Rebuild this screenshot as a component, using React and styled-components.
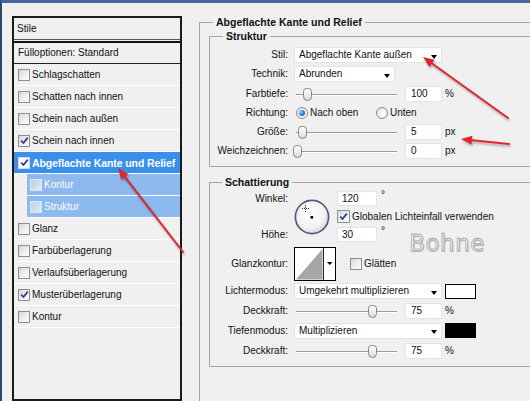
import React from "react";
import styled, { createGlobalStyle } from "styled-components";

const GlobalStyle = createGlobalStyle`
  html, body { margin: 0; padding: 0; background: #f0f0f0; }
  body { font-family: "Liberation Sans", Arial, sans-serif; }
  *, *::before, *::after { box-sizing: border-box; }
`;

const Page = styled.div`
  position: relative;
  width: 530px;
  height: 401px;
  overflow: hidden;
`;

const Frame = styled.div`
  width: 530px;
  height: 401px;
  background: #f0f0f0;
  border-top: 3px solid #47679c;
  border-left: 2px solid #2a4778;
  display: flex;
  align-items: flex-start;
  font-family: "Liberation Sans", Arial, sans-serif;
  font-size: 10px;
  line-height: 12px;
  color: #111;
`;

/* ---------- left: layer style list ---------- */

const StylesPane = styled.div`
  flex: none;
  margin: 13px 0 0 10px;
  width: 170px;
  height: 385px;
  border: 2px solid #1b1b1b;
`;

const PaneHeader = styled.div`
  height: 22px;
  padding-left: 3px;
  display: flex;
  align-items: center;
  border-bottom: 1px solid #5a5a5a;
  margin-bottom: 1px;
`;

const BlendRow = styled.div`
  height: 23px;
  padding-left: 4px;
  display: flex;
  align-items: center;
  border-top: 2px solid #111;
  border-bottom: 1px solid #222;
`;

const LayerRow = styled.div`
  height: 22px;
  display: flex;
  align-items: center;
  gap: 2px;
  white-space: nowrap;
  border-bottom: 1px solid #fff;
  margin-left: ${(p) => (p.$sub ? 13 : 0)}px;
  padding-left: ${(p) => (p.$sub ? 3 : 4)}px;
  background: ${(p) => (p.$selected ? "#3a8fea" : p.$sub ? "#8cb9ee" : "transparent")};
  color: ${(p) => (p.$selected || p.$sub ? "#fff" : "#111")};
  font-weight: ${(p) => (p.$selected ? 700 : 400)};
  font-size: ${(p) => (p.$selected ? "10.5px" : "10px")};
  letter-spacing: ${(p) => (p.$selected ? "-0.1px" : "0")};
`;

const CheckBox = styled.span`
  flex: none;
  width: ${(p) => p.$size || 12}px;
  height: ${(p) => p.$size || 12}px;
  display: inline-flex;
  align-items: center;
  justify-content: center;
  border: 1px solid ${(p) => (p.$tone === "sub" ? "#dfe8f5" : p.$tone === "sel" ? "#d0dcec" : "#8e8f8f")};
  background: ${(p) =>
    p.$tone === "sub"
      ? "linear-gradient(135deg, #b9cfeb, #dfe9f7)"
      : p.$tone === "sel"
      ? "#fbfbfb"
      : "linear-gradient(135deg, #d6d6d6 0%, #f1f1f1 60%, #fbfbfb 100%)"};
`;

const Check = () => (
  <svg width="9" height="9" viewBox="0 0 9 9">
    <polyline points="1.2,4.6 3.5,7 7.8,1.6" fill="none" stroke="#2b3d92" strokeWidth="1.7" />
  </svg>
);

const Tick = ({ checked, tone, size }) => (
  <CheckBox $tone={tone} $size={size}>{checked ? <Check /> : null}</CheckBox>
);

/* ---------- right: bevel & emboss settings ---------- */

const Group = styled.fieldset`
  margin: ${(p) => p.$top || 0}px 0 0 ${(p) => p.$left || 0}px;
  padding: ${(p) => p.$pad || "0"};
  border: 1px solid #a4a4a4;
  width: ${(p) => p.$width}px;
  min-width: 0;
  min-height: ${(p) => p.$minh || 0}px;
  flex: none;
`;

const Legend = styled.legend`
  margin-left: ${(p) => p.$indent}px;
  padding: 0 3px;
  font-size: 10.5px;
  line-height: 13px;
  font-weight: 700;
  color: #111;
`;

const FieldRow = styled.div`
  display: flex;
  align-items: center;
  height: ${(p) => p.$h || 16}px;
  margin-top: ${(p) => p.$gap || 0}px;
  white-space: nowrap;
`;

const Label = styled.span`
  flex: none;
  width: 78px;
  margin-right: 6px;
  text-align: right;
  white-space: nowrap;
`;

const Select = styled.div`
  flex: none;
  width: ${(p) => p.$w}px;
  height: 16px;
  padding: 0 4px 0 4px;
  display: flex;
  align-items: center;
  justify-content: space-between;
  background: #fff;
  border: 1px solid #e3e3e3;
`;

const Caret = styled.span`
  width: 0;
  height: 0;
  margin-top: 3px;
  border-left: 3.5px solid transparent;
  border-right: 3.5px solid transparent;
  border-top: 4px solid #000;
`;

const Slider = styled.div`
  position: relative;
  flex: none;
  width: 108px;
  height: 16px;
  &::before {
    content: "";
    position: absolute;
    left: 2px;
    right: 5px;
    top: 8px;
    height: 1px;
    background: #9c9c9c;
    box-shadow: 0 1px 0 #fff;
  }
`;

const Thumb = styled.span`
  position: absolute;
  top: 2px;
  width: 9px;
  height: 13px;
  border: 1px solid #858585;
  border-radius: 4px 4px 5px 5px;
  background: linear-gradient(#ffffff, #dcdcdc);
`;

const NumBox = styled.div`
  flex: none;
  width: ${(p) => p.$w || 37}px;
  height: ${(p) => p.$h || 16}px;
  margin-left: ${(p) => p.$ml || 0}px;
  padding-left: ${(p) => p.$pl || 5}px;
  display: flex;
  align-items: center;
  background: #fff;
  border: 1px solid #e4e4e4;
`;

const Unit = styled.span`
  margin-left: 3px;
`;

const Degree = styled.span`
  align-self: flex-start;
  margin-left: 4px;
  margin-top: -2px;
  font-size: 10px;
`;

const Radio = styled.span`
  flex: none;
  width: 12px;
  height: 12px;
  border-radius: 50%;
  border: 1px solid #8b8b8b;
  background: radial-gradient(circle at 60% 60%, #ffffff 0%, #e6e6e6 70%, #cfcfcf 100%);
  display: inline-flex;
  align-items: center;
  justify-content: center;
  &::after {
    content: "";
    display: ${(p) => (p.$on ? "block" : "none")};
    width: 6px;
    height: 6px;
    border-radius: 50%;
    background: radial-gradient(circle at 35% 35%, #8fd0ff 0%, #1e78d0 55%, #0b4a92 100%);
  }
`;

const Option = styled.span`
  display: inline-flex;
  align-items: center;
  gap: 2px;
  width: ${(p) => (p.$w ? `${p.$w}px` : "auto")};
  margin-left: ${(p) => p.$ml || 0}px;
`;

const Swatch = styled.span`
  flex: none;
  width: 31px;
  height: 15px;
  margin-left: 3px;
  border: 1px solid #000;
  background: ${(p) => p.$color};
`;

const AngleGrid = styled.div`
  display: grid;
  grid-template-columns: 78px 36px auto;
  grid-template-rows: 15px 13px 15px;
  column-gap: 6px;
  row-gap: 4px;
  align-items: center;
`;

const GridLabel = styled.span`
  grid-column: 1;
  grid-row: ${(p) => p.$row};
  text-align: right;
  white-space: nowrap;
`;

const DialCell = styled.div`
  grid-column: 2;
  grid-row: 1 / 4;
  width: 36px;
  height: 36px;
`;

const GridLine = styled.div`
  grid-column: 3;
  grid-row: ${(p) => p.$row};
  margin-left: 1px;
  height: 100%;
  display: flex;
  align-items: center;
  gap: ${(p) => p.$gap || 0}px;
  white-space: nowrap;
`;

const Preview = styled.span`
  align-self: flex-start;
  margin: 9px 0 -9px 24px;
  font-family: "DejaVu Sans", Verdana, sans-serif;
  font-size: 23px;
  line-height: 15px;
  letter-spacing: 0.5px;
  color: #ededed;
  -webkit-text-stroke: 0.8px #a8a8a8;
  text-shadow: 1px 1px 1px rgba(0, 0, 0, 0.22), -1px -1px 0 #fff;
`;

const ContourBox = styled.div`
  flex: none;
  width: 42px;
  height: 34px;
`;

const CheckLabel = styled.span`
  display: inline-flex;
  align-items: center;
  gap: 2px;
  margin-left: ${(p) => p.$ml || 0}px;
`;

/* ---------- drawings ---------- */

const AngleDial = () => (
  <svg width="36" height="36" viewBox="0 0 36 36">
    <defs>
      <radialGradient id="dialFill" cx="45%" cy="40%" r="62%">
        <stop offset="0" stopColor="#ffffff" />
        <stop offset="0.7" stopColor="#f2f2f2" />
        <stop offset="1" stopColor="#d2d2d2" />
      </radialGradient>
    </defs>
    <circle cx="18" cy="18" r="16.6" fill="url(#dialFill)" stroke="#4f5a7c" strokeWidth="1.7" />
    <g stroke="#333" strokeWidth="1" strokeDasharray="1 1">
      <line x1="8" y1="9.5" x2="15" y2="9.5" />
      <line x1="11.5" y1="6" x2="11.5" y2="13" />
    </g>
    <rect x="16.5" y="17" width="2.6" height="2.6" fill="#000" />
  </svg>
);

const ContourPreview = () => (
  <svg width="42" height="34" viewBox="0 0 42 34">
    <rect x="0.5" y="0.5" width="41" height="33" fill="#fff" stroke="#000" />
    <polygon points="2,32.5 28.5,2 28.5,32.5" fill="#a6a6a6" />
    <line x1="29.5" y1="1" x2="29.5" y2="33" stroke="#222" />
    <polygon points="33,15 38.5,15 35.75,18" fill="#000" />
  </svg>
);

const Overlay = styled.svg`
  position: absolute;
  left: 0;
  top: 0;
  pointer-events: none;
  filter: drop-shadow(1px 2px 1px rgba(0, 0, 0, 0.3));
`;

const Arrow = ({ x1, y1, x2, y2 }) => {
  const dx = x2 - x1;
  const dy = y2 - y1;
  const len = Math.hypot(dx, dy);
  const ux = dx / len;
  const uy = dy / len;
  const hl = 11;
  const hw = 4.5;
  const bx = x2 - ux * hl;
  const by = y2 - uy * hl;
  const px = -uy * hw;
  const py = ux * hw;
  return (
    <g>
      <line x1={x1} y1={y1} x2={bx + ux * 2} y2={by + uy * 2} stroke="#e1252b" strokeWidth="2" strokeLinecap="round" />
      <polygon points={`${x2},${y2} ${bx + px},${by + py} ${bx - px},${by - py}`} fill="#e1252b" />
    </g>
  );
};

/* ---------- data ---------- */

const layers = [
  { name: "Schlagschatten" },
  { name: "Schatten nach innen" },
  { name: "Schein nach außen" },
  { name: "Schein nach innen", checked: true },
  { name: "Abgeflachte Kante und Relief", checked: true, selected: true },
  { name: "Kontur", sub: true },
  { name: "Struktur", sub: true },
  { name: "Glanz" },
  { name: "Farbüberlagerung" },
  { name: "Verlaufsüberlagerung" },
  { name: "Musterüberlagerung", checked: true },
  { name: "Kontur" },
];

const SliderField = ({ label, pos, value, unit, gap }) => (
  <FieldRow $gap={gap}>
    <Label>{label}</Label>
    <Slider>
      <Thumb style={{ left: `${pos * 100 - 1}px` }} />
    </Slider>
    <NumBox $ml={3}>{value}</NumBox>
    <Unit>{unit}</Unit>
  </FieldRow>
);

export default function App() {
  return (
    <Page>
      <GlobalStyle />
      <Frame>
        <StylesPane>
          <PaneHeader>Stile</PaneHeader>
          <BlendRow>Fülloptionen: Standard</BlendRow>
          {layers.map((l, i) => (
            <LayerRow key={i} $sub={l.sub} $selected={l.selected}>
              <Tick checked={l.checked} tone={l.selected ? "sel" : l.sub ? "sub" : undefined} />
              <span>{l.name}</span>
            </LayerRow>
          ))}
        </StylesPane>

        <Group $top={12.5} $left={17} $width={360} $minh={420} $pad="0 0 0 9px">
          <Legend $indent={4}>Abgeflachte Kante und Relief</Legend>

          <Group $top={1} $width={340} $pad="4.5px 0 7px 0">
            <Legend $indent={13}>Struktur</Legend>
            <FieldRow>
              <Label>Stil:</Label>
              <Select $w={148}>
                <span>Abgeflachte Kante außen</span>
                <Caret />
              </Select>
            </FieldRow>
            <FieldRow $gap={3.3}>
              <Label>Technik:</Label>
              <Select $w={101}>
                <span>Abrunden</span>
                <Caret />
              </Select>
            </FieldRow>
            <SliderField gap={3.3} label="Farbtiefe:" pos={0.1} value="100" unit="%" />
            <FieldRow $gap={3.3}>
              <Label>Richtung:</Label>
              <Option $w={80} $ml={2}>
                <Radio $on />
                <span>Nach oben</span>
              </Option>
              <Option>
                <Radio />
                <span>Unten</span>
              </Option>
            </FieldRow>
            <SliderField gap={3.3} label="Größe:" pos={0.05} value="5" unit="px" />
            <SliderField gap={3.3} label="Weichzeichnen:" pos={0} value="0" unit="px" />
          </Group>

          <Group $top={8.5} $width={340} $pad="2.5px 0 7px 0">
            <Legend $indent={12}>Schattierung</Legend>
            <AngleGrid>
              <GridLabel $row={1}>Winkel:</GridLabel>
              <DialCell>
                <AngleDial />
              </DialCell>
              <GridLine $row={1}>
                <NumBox $w={40} $h={15} $pl={4}>120</NumBox>
                <Degree>°</Degree>
              </GridLine>
              <GridLine $row={2} $gap={2}>
                <Tick checked size={13} />
                <span>Globalen Lichteinfall verwenden</span>
              </GridLine>
              <GridLabel $row={3}>Höhe:</GridLabel>
              <GridLine $row={3}>
                <NumBox $w={40} $h={15} $pl={4}>30</NumBox>
                <Degree>°</Degree>
                <Preview>Bohne</Preview>
              </GridLine>
            </AngleGrid>

            <FieldRow $h={34} $gap={5}>
              <Label>Glanzkontur:</Label>
              <ContourBox>
                <ContourPreview />
              </ContourBox>
              <CheckLabel $ml={14}>
                <Tick />
                <span>Glätten</span>
              </CheckLabel>
            </FieldRow>

            <FieldRow $gap={2}>
              <Label>Lichtermodus:</Label>
              <Select $w={148}>
                <span>Umgekehrt multiplizieren</span>
                <Caret />
              </Select>
              <Swatch $color="#ffffff" />
            </FieldRow>
            <SliderField gap={3.7} label="Deckkraft:" pos={0.75} value="75" unit="%" />
            <FieldRow $gap={3.7}>
              <Label>Tiefenmodus:</Label>
              <Select $w={148}>
                <span>Multiplizieren</span>
                <Caret />
              </Select>
              <Swatch $color="#000000" />
            </FieldRow>
            <SliderField gap={3.7} label="Deckkraft:" pos={0.75} value="75" unit="%" />
          </Group>
        </Group>
      </Frame>

      <Overlay width="530" height="401" viewBox="0 0 530 401">
        <Arrow x1={183} y1={252} x2={118} y2={168} />
        <Arrow x1={508} y1={118} x2={423} y2={57} />
        <Arrow x1={509} y1={144} x2={461} y2={139} />
      </Overlay>
    </Page>
  );
}
